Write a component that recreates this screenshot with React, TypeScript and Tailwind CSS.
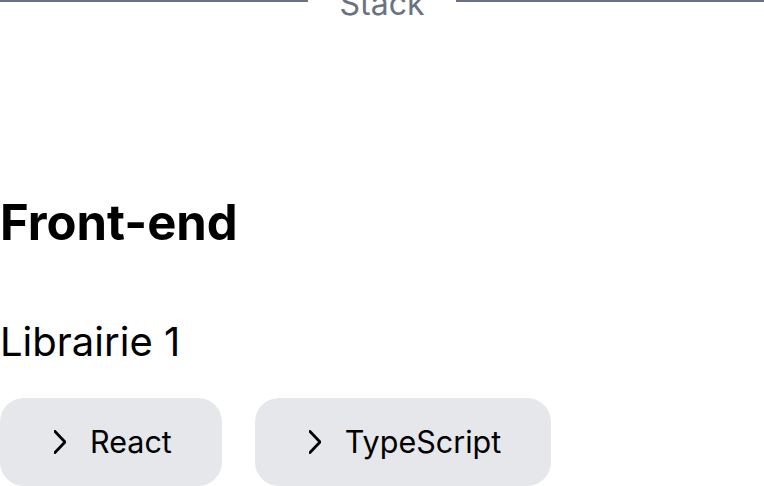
const libs = ["React", "TypeScript"];

function Chevron() {
  return (
    <svg viewBox="0 0 12 24" className="h-6 w-3 shrink-0" fill="none" stroke="currentColor" strokeWidth={2.8} strokeLinecap="square">
      <path d="M1 1.5 11 12 1 22.5" />
    </svg>
  );
}

function Chip({ label }: { label: string }) {
  return (
    <button className="flex h-[88px] items-center gap-6 rounded-3xl bg-gray-200 pl-[54px] pr-[50px] text-[30.5px] leading-none text-black">
      <Chevron />
      <span>{label}</span>
    </button>
  );
}

export default function App() {
  return (
    <div className="min-h-screen overflow-hidden bg-white font-['Inter',sans-serif]">
      <div className="-mt-[16px] flex items-start">
        <div className="mt-[16px] flex-1 border-t-2 border-gray-500" />
        <span className="px-8 text-[32px] leading-10 text-gray-500">Stack</span>
        <div className="mt-[16px] flex-1 border-t-2 border-gray-500" />
      </div>

      <section className="mt-[174px]">
        <h2 className="text-[49px] font-bold leading-none text-black">Front-end</h2>
        <h3 className="mt-[75px] text-[40px] leading-none text-black">Librairie 1</h3>
        <div className="mt-[36px] flex gap-[33px]">
          {libs.map((lib) => (
            <Chip key={lib} label={lib} />
          ))}
        </div>
      </section>
    </div>
  );
}
